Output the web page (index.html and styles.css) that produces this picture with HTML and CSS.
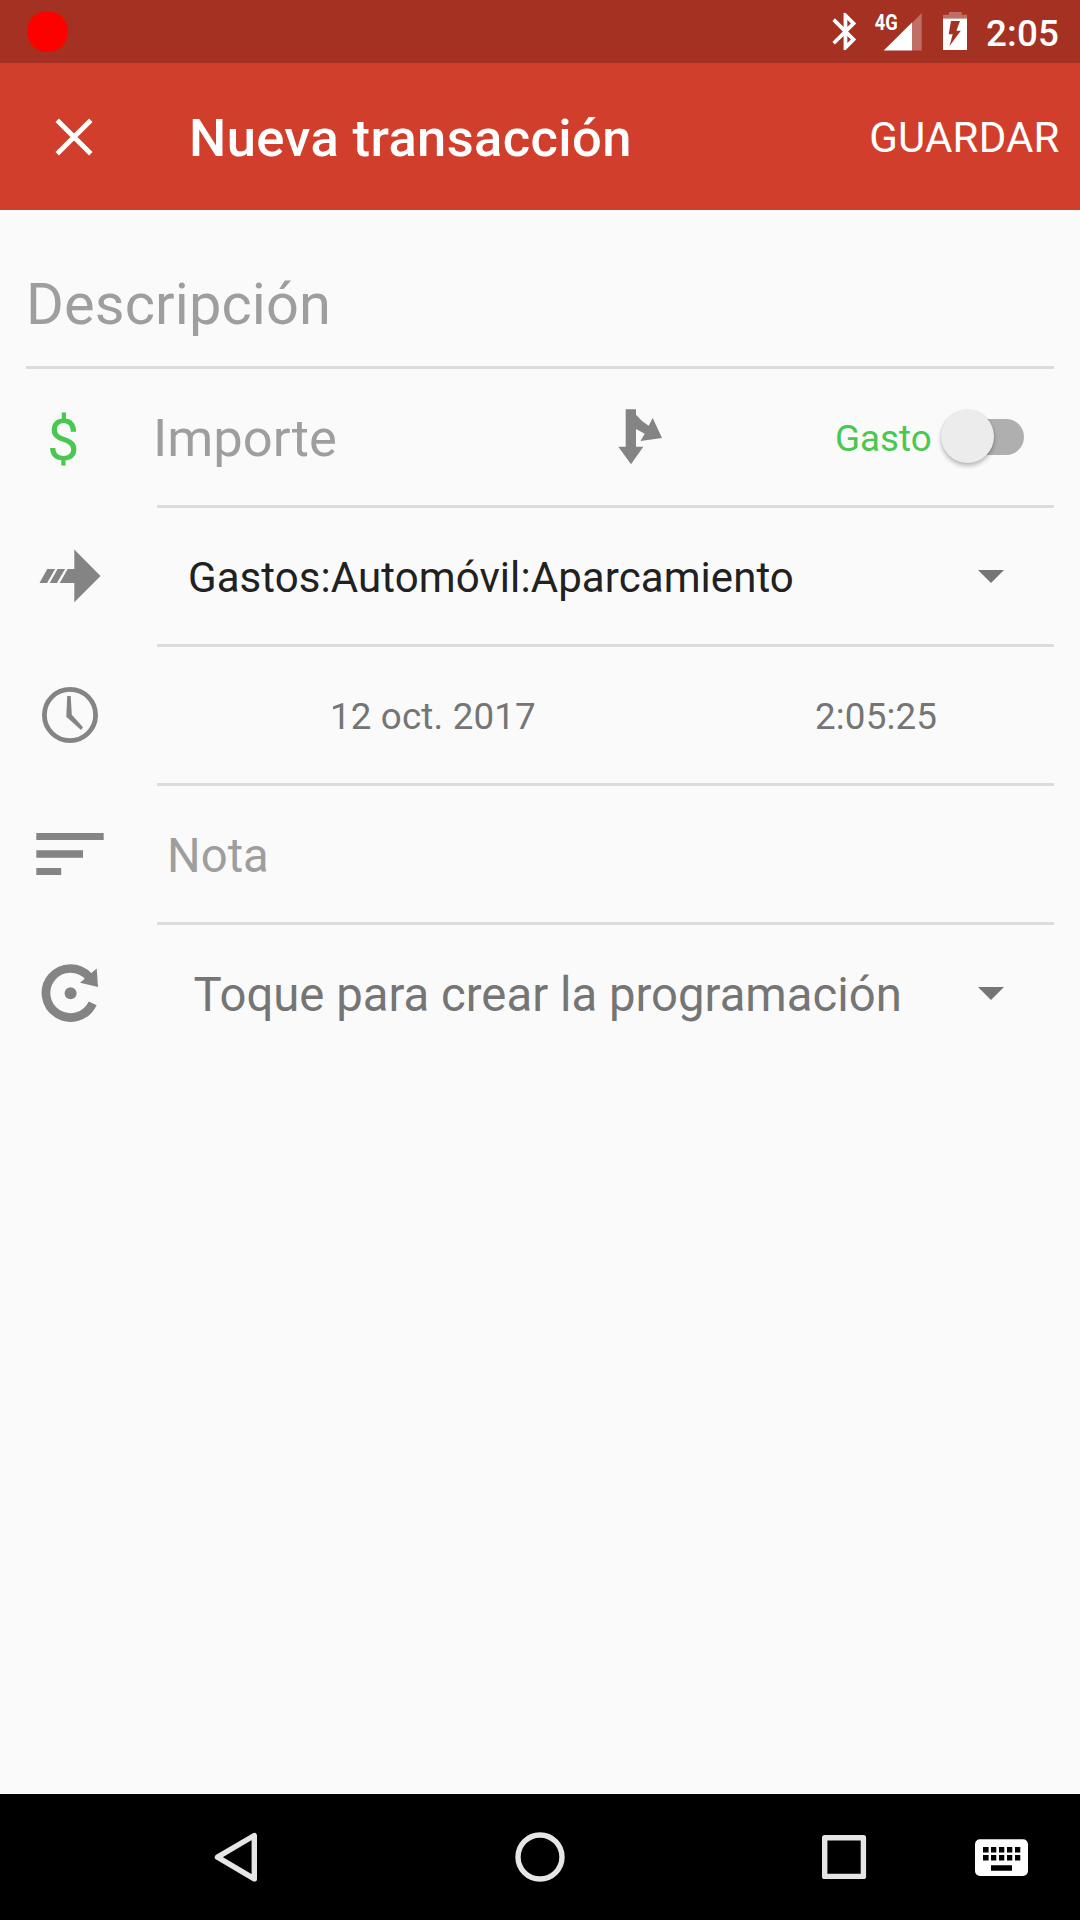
FILE: index.html
```html
<!DOCTYPE html>
<html lang="es">
<head>
<meta charset="utf-8">
<title>Nueva transacción</title>
<link rel="stylesheet" href="styles.css">
</head>
<body>
<div class="screen">
  <div class="status-bar">
    <span class="record-dot"></span>
    <svg class="status-icons" width="148" height="63" viewBox="828 0 148 63">
      <svg x="832.3" y="12.6" width="23.9" height="37.7" viewBox="5 2 12.71 20"><path fill="#fff" d="M17.71 7.71L12 2h-1v7.59L6.41 5 5 6.41 10.59 12 5 17.59 6.41 19 11 14.41V22h1l5.71-5.71-4.3-4.29 4.3-4.29zM13 5.83l1.88 1.88L13 9.59V5.83zm1.88 10.46L13 18.17v-3.76l1.88 1.88z"/></svg>
      <text class="network" x="874.7" y="30" textLength="23" lengthAdjust="spacingAndGlyphs">4G</text>
      <path fill="#fff" fill-opacity=".3" d="M912 23l9.7-10v37.5H912z"/>
      <path fill="#fff" d="M883.7 50.5L912 22.6v27.9z"/>
      <path fill="#fff" fill-opacity=".3" d="M943 18.500v-3.700h6V12h12.700v2.800h5.300v3.700z"/>
      <path fill="#fff" fill-rule="evenodd" d="M943 18.500h24V50h-24zM951 21l-2.300 13.300h4L949.500 46l11.300-15.300h-4.400L960 21z"/>
    </svg>
    <span class="clock">2:05</span>
  </div>

  <div class="app-bar">
    <svg class="close" width="38" height="38" viewBox="0 0 38 38"><path d="M2.200 2.200l33.600 33.600M35.800 2.200L2.200 35.800" stroke="#fff" stroke-width="4.900"/></svg>
    <h1 class="title">Nueva transacción</h1>
    <span class="save">GUARDAR</span>
  </div>

  <main class="form">
    <div class="description">Descripción</div>
    <div class="divider divider-full"></div>

    <div class="row">
      <div class="row-icon currency">$</div>
      <span class="amount">Importe</span>
      <svg class="split" width="46" height="136" viewBox="617 0 46 136"><path fill="#848484" d="M625.700 40.300H636v5.400Q641 52 648.700 56.700l4-7.600L662 69l-21.500 3 4.200-7.200Q640.500 62.500 636 60v17.700h7.300L631 95.300l-12.700-17.600h7.400z"/></svg>
      <span class="type">Gasto</span>
      <span class="switch"><span class="thumb"></span></span>
    </div>
    <div class="divider"></div>

    <div class="row">
      <svg class="row-icon" width="131" height="136" viewBox="26 0 131 136"><path fill="#848484" d="M74.300 41.500L100.500 68 74.300 94.300V75H59.700l8-14h6.600zM49.700 75l7.900-14h7.500l-8.200 14zM39.500 75l7.800-14h7.800l-8 14z"/></svg>
      <span class="account">Gastos:Automóvil:Aparcamiento</span>
      <svg class="caret" width="26" height="13" viewBox="0 0 26 13"><path fill="#757575" d="M0 0h26L13 13z"/></svg>
    </div>
    <div class="divider"></div>

    <div class="row">
      <svg class="row-icon" width="131" height="136" viewBox="26 0 131 136"><circle cx="70" cy="68" r="25.600" fill="none" stroke="#848484" stroke-width="4.800"/><path fill="#848484" d="M67.200 49h3.500l1.100 18.800L83 80.300 81 83 66.300 69.700z"/></svg>
      <span class="date">12 oct. 2017</span>
      <span class="time">2:05:25</span>
    </div>
    <div class="divider"></div>

    <div class="row">
      <svg class="row-icon" width="131" height="136" viewBox="26 0 131 136"><path fill="#848484" d="M36.300 47h67.400v7H36.300zM36.300 64.300H83v7.400H36.300zM36.300 82h24.900v7H36.300z"/></svg>
      <span class="note">Nota</span>
    </div>
    <div class="divider"></div>

    <div class="row">
      <svg class="row-icon" width="131" height="136" viewBox="26 0 131 136"><path fill="none" stroke="#848484" stroke-width="8.700" d="M88.700 51.600A24.500 24.500 0 1 0 92.700 78.300"/><circle cx="70.600" cy="68.200" r="6" fill="#848484"/><path fill="#848484" d="M96.700 43.600L98 62l-18-4.300z"/></svg>
      <span class="schedule">Toque para crear la programación</span>
      <svg class="caret" width="26" height="13" viewBox="0 0 26 13"><path fill="#757575" d="M0 0h26L13 13z"/></svg>
    </div>
  </main>

  <nav class="nav-bar">
    <svg width="1080" height="126" viewBox="0 0 1080 126">
      <g fill="none" stroke="#e6e6e6" stroke-width="5.400" stroke-linejoin="round">
        <path d="M217.500 63.200L254.300 41.500V84.900z"/>
        <circle cx="540" cy="63" r="22"/>
        <rect x="824.700" y="43.700" width="38.700" height="38.700"/>
      </g>
      <rect x="975" y="45.300" width="53" height="36.700" rx="5" fill="#fff"/>
      <path d="M983 53h5.600v5.400H983zM991 53h5.300v5.400H991zM999 53h5.300v5.400H999zM1007 53h5.300v5.400H1007zM1015 53h5.300v5.400H1015zM983 61h5.600v5.400H983zM991 61h5.300v5.400H991zM999 61h5.300v5.400H999zM1007 61h5.300v5.400H1007zM1015 61h5.300v5.400H1015zM991 71.300h21v5.400H991z"/>
    </svg>
  </nav>
</div>
</body>
</html>
```
FILE: styles.css
```css
* { box-sizing: border-box; }

body {
  margin: 0;
  font-family: Roboto, sans-serif;
}

svg { display: block; flex: none; }

.screen {
  display: flex;
  flex-direction: column;
  width: 1080px;
  height: 1920px;
  background: #fafafa;
  white-space: nowrap;
}

.status-bar {
  display: flex;
  align-items: center;
  height: 63px;
  padding: 0 20px 0 27px;
  background: #a53122;
  color: #fff;
}

.record-dot {
  width: 41px;
  height: 41px;
  border-radius: 50%;
  background: #f00;
}

.status-icons { margin-left: auto; }

.network { font-size: 22.500px; font-weight: 700; fill: #fff; }

.clock {
  width: 74px;
  margin-left: 10px;
  padding-top: 3px;
  font-size: 36.750px;
  font-weight: 500;
  letter-spacing: .2px;
}

.app-bar {
  display: flex;
  align-items: center;
  height: 147px;
  padding: 0 20.500px 0 54.500px;
  background: #d13e2b;
  color: #fff;
}

.title {
  margin: 0 0 0 96.500px;
  padding-top: 3px;
  font-size: 52.500px;
  font-weight: 500;
  letter-spacing: .38px;
}

.save {
  margin-left: auto;
  padding-top: 2px;
  font-size: 42px;
  letter-spacing: .15px;
}

.form {
  flex: 1;
  padding: 0 26px;
  color: #757575;
}

.description {
  display: flex;
  align-items: center;
  height: 156px;
  padding-top: 31px;
  font-size: 57.750px;
  letter-spacing: .12px;
  color: #9e9e9e;
}

.divider {
  height: 3px;
  margin-left: 131px;
  background: #dcdcdc;
}

.divider-full { margin-left: 0; }

.row {
  display: flex;
  align-items: center;
  height: 136px;
}

.row-icon { width: 131px; }

.row span { padding-top: 3px; }

.currency {
  padding: 5px 0 0 21px;
  font-size: 57.750px;
  color: #49c851;
}

.row .amount {
  width: 464px;
  margin-left: -4px;
  padding-top: 2px;
  font-size: 52.500px;
  color: #9e9e9e;
}

.type {
  width: 98px;
  margin-left: 172px;
  font-size: 36.750px;
  color: #49c851;
}

.row .switch {
  display: flex;
  align-items: center;
  width: 64px;
  height: 36px;
  margin-left: 27px;
  padding: 0;
  border-radius: 18px;
  background: #afafaf;
}

.row .thumb {
  flex: none;
  width: 53px;
  height: 53px;
  margin: -1px 0 0 -19.500px;
  padding: 0;
  border-radius: 50%;
  background: #ececec;
  box-shadow: 0 3px 4px rgba(0, 0, 0, .25), 0 0 2px rgba(0, 0, 0, .12);
}

.account {
  margin-left: 31px;
  font-size: 42px;
  letter-spacing: .08px;
  color: #212121;
}

.caret { margin: 0 50px 0 auto; }

.date, .time { font-size: 36.750px; letter-spacing: .15px; }

.date { width: 485px; margin-left: 173px; }

.row .note {
  margin-left: 10px;
  padding-top: 4px;
  font-size: 47.250px;
  color: #9e9e9e;
}

.row .schedule {
  margin-left: 36.500px;
  padding-top: 4px;
  font-size: 47.250px;
  letter-spacing: .02px;
}

.nav-bar { height: 126px; background: #000; }
```
